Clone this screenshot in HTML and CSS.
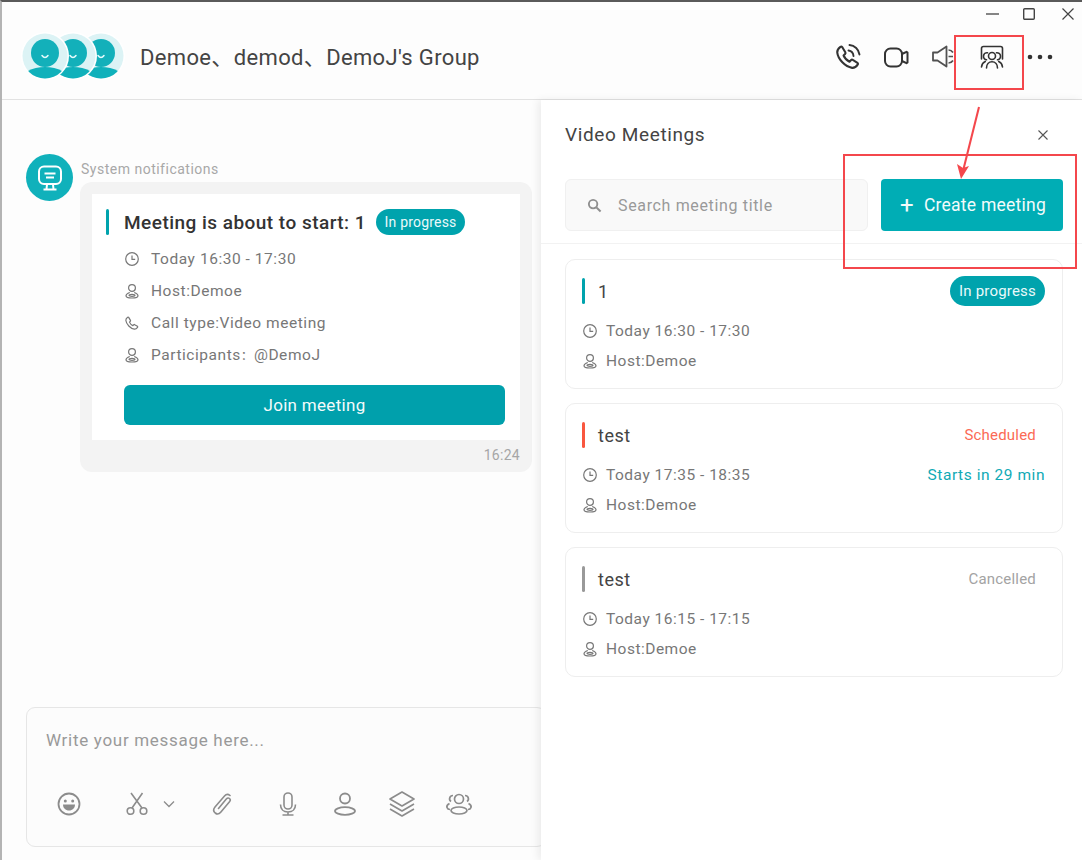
FILE: index.html
```html
<!DOCTYPE html>
<html lang="en">
<head>
<meta charset="utf-8">
<title>Video Meetings</title>
<link rel="stylesheet" href="styles.css">
</head>
<body>
<svg class="defs" width="0" height="0" aria-hidden="true">
  <defs>
    <clipPath id="round"><circle cx="24" cy="24" r="22.500"/></clipPath>
    <symbol id="i-avatar" viewBox="0 0 48 48">
      <circle cx="24" cy="24" r="24" fill="#fff"/>
      <circle cx="24" cy="24" r="22.500" fill="#dcf3f5"/>
      <g clip-path="url(#round)">
        <circle cx="24" cy="21" r="14" fill="#13b0ba"/>
        <ellipse cx="24" cy="49" rx="24" ry="14" fill="#10b1bb"/>
      </g>
      <path d="M21 23.500q3 4 6 0" fill="none" stroke="#e6fbfc" stroke-width="1.500" stroke-linecap="round"/>
    </symbol>
    <symbol id="i-clock" viewBox="0 0 16 16">
      <circle cx="8" cy="8" r="6.300" fill="none" stroke="currentColor" stroke-width="1.200"/>
      <path d="M8 4.500V8.300H11.200" fill="none" stroke="currentColor" stroke-width="1.200"/>
    </symbol>
    <symbol id="i-host" viewBox="0 0 16 16">
      <g fill="none" stroke="currentColor" stroke-width="1.200">
        <circle cx="8" cy="5" r="3.400"/>
        <path d="M5.800 9.500C3.500 10.300 2 11.300 2 12.700 2 14 4.500 15 8 15s6-1 6-2.300c0-1.400-1.500-2.400-3.800-3.200"/>
        <ellipse cx="8" cy="12.300" rx="3" ry="1"/>
      </g>
    </symbol>
    <symbol id="i-phone" viewBox="0 0 24 24">
      <path d="M7 3.500 9.700 8c.3.500.2 1-.2 1.400L8.200 10.700c1 2.300 2.800 4.300 5.100 5.300l1.400-1.400c.4-.4 1-.4 1.400-.1l4 2.500c.5.300.6 1 .2 1.500-1.100 1.600-2.700 3-4.800 2.800C9.500 20.300 3.500 14 2.800 8.300 2.500 6 4 4.400 5.500 3.300c.5-.3 1.200-.2 1.500.2Z" fill="none" stroke="currentColor" stroke-width="1.800" stroke-linejoin="round"/>
    </symbol>
  </defs>
</svg>

<div class="window">
  <header class="header">
    <div class="avatars">
      <svg class="avatar stack"><use href="#i-avatar"/></svg>
      <svg class="avatar stack"><use href="#i-avatar"/></svg>
      <svg class="avatar stack"><use href="#i-avatar"/></svg>
    </div>
    <h1 class="group-title">Demoe、demod、DemoJ's Group</h1>
    <div class="tools">
      <svg class="tool" viewBox="0 0 28 28"><use href="#i-phone" width="28" height="28"/><path d="M14.500 7.500a6 6 0 0 1 5 5.500M15.500 2a11 11 0 0 1 10 9.500" fill="none" stroke="currentColor" stroke-width="1.900" stroke-linecap="round"/></svg>
      <svg class="tool" viewBox="0 0 28 28"><rect x="3" y="5.500" width="17" height="18" rx="5.500" fill="none" stroke="currentColor" stroke-width="2"/><path d="M20 11 24.500 8.800 25.500 9.500V19.500L24.500 20.200 20 18" fill="none" stroke="currentColor" stroke-width="2" stroke-linejoin="round"/></svg>
      <svg class="tool" viewBox="0 0 28 28"><path d="M3 9.500H7.500L16.500 3.500V23.500L7.500 17.500H3Z" fill="none" stroke="currentColor" stroke-width="1.800" stroke-linejoin="round" opacity=".85"/><path d="M18.500 7C21 7 22 8 23 9.500M18.500 13.500H23M18.500 20C21 20 22 19 23 17.500" fill="none" stroke="currentColor" stroke-width="1.700" opacity=".85"/></svg>
      <svg class="tool" viewBox="0 0 28 28"><g fill="none" stroke="currentColor" stroke-width="1.600" stroke-linecap="round"><path d="M3.500 16V5.500C3.500 4.400 4.400 3.500 5.500 3.500h17C23.600 3.500 24.500 4.400 24.500 5.500V16"/><circle cx="14" cy="13" r="3.500"/><path d="M9.500 9.800a3.400 3.400 0 0 0-1 7M18.500 9.800a3.400 3.400 0 0 1 1 7M8.500 25c0-3.800 2.300-6.300 5.500-6.300s5.500 2.500 5.500 6.300M3.500 24c.3-2.700 1.500-4.500 3.800-5.500M24.500 24c-.3-2.700-1.500-4.500-3.800-5.500"/></g></svg>
      <svg class="tool" viewBox="0 0 28 28"><circle cx="4" cy="14" r="2.300" fill="currentColor"/><circle cx="14" cy="14" r="2.300" fill="currentColor"/><circle cx="24" cy="14" r="2.300" fill="currentColor"/></svg>
    </div>
    <div class="winctl">
      <svg class="ctl ctl-min" viewBox="0 0 14 14"><path d="M0 7H14" stroke="currentColor" stroke-width="1.400"/></svg>
      <svg class="ctl ctl-max" viewBox="0 0 14 14"><rect x="1.700" y="1.700" width="10.600" height="10.600" rx="1" fill="none" stroke="currentColor" stroke-width="1.400"/></svg>
      <svg class="ctl ctl-close" viewBox="0 0 14 14"><path d="M1.500 1.500 12.500 12.500M12.500 1.500 1.500 12.500" stroke="currentColor" stroke-width="1.200"/></svg>
    </div>
  </header>

  <main class="chat">
    <div class="message">
      <div class="sys-avatar">
        <svg viewBox="0 0 28 28" width="28" height="28"><g fill="none" stroke="#fff" stroke-width="2"><rect x="3" y="2.500" width="22" height="17.500" rx="5"/><path d="M8.500 9.500H19.500M10 13.500H18M11 20.500 10.500 25M17 20.500 17.500 25M7.500 25.500H20.500"/></g></svg>
      </div>
      <div class="msg-body">
        <div class="sender">System notifications</div>
        <div class="bubble">
          <div class="notice">
            <div class="notice-head">
              <span class="bar bar-teal"></span>
              <span class="notice-title">Meeting is about to start: 1</span>
              <span class="badge badge-small">In progress</span>
            </div>
            <div class="notice-row"><svg class="ico"><use href="#i-clock"/></svg>Today 16:30 - 17:30</div>
            <div class="notice-row"><svg class="ico"><use href="#i-host"/></svg>Host:Demoe</div>
            <div class="notice-row"><svg class="ico" viewBox="0 0 24 24"><use href="#i-phone" width="24" height="24"/></svg>Call type:Video meeting</div>
            <div class="notice-row"><svg class="ico"><use href="#i-host"/></svg><span>Participants<span class="colon">：</span>@DemoJ</span></div>
            <div class="join">Join meeting</div>
          </div>
          <div class="stamp">16:24</div>
        </div>
      </div>
    </div>

    <div class="composer">
      <div class="placeholder">Write your message here...</div>
      <div class="composer-tools">
        <svg class="ct ct-emoji" viewBox="0 0 24 24"><circle cx="12" cy="12" r="10.500" fill="none" stroke="currentColor" stroke-width="1.800"/><circle cx="8.300" cy="9" r="1.500" fill="currentColor"/><circle cx="15.700" cy="9" r="1.500" fill="currentColor"/><path d="M6 12.500H18C18 16 15.500 18.500 12 18.500S6 16 6 12.500Z" fill="currentColor"/></svg>
        <svg class="ct ct-cut" viewBox="0 0 24 24"><g fill="none" stroke="currentColor" stroke-width="1.600"><circle cx="5.500" cy="19" r="3.300"/><circle cx="18.500" cy="19" r="3.300"/><path d="M7 16 17.500 1M17 16 6 1"/></g></svg>
        <svg class="ct-chev" viewBox="0 0 12 8"><path d="M1 1.500 6 6.500 11 1.500" fill="none" stroke="currentColor" stroke-width="1.300"/></svg>
        <svg class="ct ct-clip" viewBox="0 0 24 24"><path d="M19 3.500c-1.800-1.500-4-1.200-5.500.5L4 15c-1.800 2.200-1.600 4.500.2 6 1.800 1.400 4 1 5.500-.8l8.800-10.400c1-1.200.9-2.500 0-3.300-1-.8-2.200-.6-3.200.6L7.500 16.500" fill="none" stroke="currentColor" stroke-width="1.600" stroke-linecap="round"/></svg>
        <svg class="ct ct-mic" viewBox="0 0 24 24"><g fill="none" stroke="currentColor" stroke-width="1.600"><rect x="8" y="1" width="8" height="16" rx="4"/><path d="M4.500 12.500c0 4.500 3 7.500 7.500 7.500s7.500-3 7.500-7.500M12 20V23M6.500 23H17.500"/></g></svg>
        <svg class="ct ct-person" viewBox="0 0 24 24"><g fill="none" stroke="currentColor" stroke-width="1.800"><circle cx="12" cy="6.500" r="5"/><ellipse cx="12" cy="19" rx="10" ry="3.800"/></g></svg>
        <svg class="ct ct-layers" viewBox="0 0 28 28"><g fill="none" stroke="currentColor" stroke-width="1.700" stroke-linejoin="round"><path d="M14 2 26 9 14 16 2 9Z"/><path d="M2 14 14 21 26 14M2 19 14 26 26 19"/></g></svg>
        <svg class="ct ct-group" viewBox="0 0 28 24"><g fill="none" stroke="currentColor" stroke-width="1.700"><circle cx="14" cy="7" r="4.500"/><ellipse cx="14" cy="18.500" rx="8" ry="3.500"/><path d="M8 3.500a3.300 3.300 0 0 0-2 6M20 3.500a3.300 3.300 0 0 1 2 6M4.500 11.500C2.500 12.500 1.500 14 2 15.500 2.500 17 4 17.500 5 17.500M23.500 11.500c2 1 3 2.500 2.500 4-.5 1.500-2 2-3 2"/></g></svg>
      </div>
    </div>
  </main>

  <aside class="panel">
    <div class="panel-head">
      <h2 class="panel-title">Video Meetings</h2>
      <svg class="panel-close" viewBox="0 0 10 10"><path d="M.5.500 9.500 9.500M9.500.500.500 9.500" stroke="currentColor" stroke-width="1.100"/></svg>
    </div>
    <div class="panel-actions">
      <div class="search">
        <svg class="search-ico" viewBox="0 0 16 16"><circle cx="6.500" cy="6.500" r="4.500" fill="none" stroke="currentColor" stroke-width="2"/><path d="M10 10 14.500 14.500" stroke="currentColor" stroke-width="2.200"/></svg>
        <span>Search meeting title</span>
      </div>
      <div class="create"><span class="plus">+</span>Create meeting</div>
    </div>
    <div class="cards">
      <article class="card">
        <div class="card-head">
          <span class="bar bar-teal"></span><span class="card-title">1</span>
          <span class="badge">In progress</span>
        </div>
        <div class="card-row"><svg class="ico"><use href="#i-clock"/></svg>Today 16:30 - 17:30</div>
        <div class="card-row"><svg class="ico"><use href="#i-host"/></svg>Host:Demoe</div>
      </article>
      <article class="card">
        <div class="card-head">
          <span class="bar bar-red"></span><span class="card-title">test</span>
          <span class="status status-red">Scheduled</span>
        </div>
        <div class="card-row"><svg class="ico"><use href="#i-clock"/></svg>Today 17:35 - 18:35<span class="starts">Starts in 29 min</span></div>
        <div class="card-row"><svg class="ico"><use href="#i-host"/></svg>Host:Demoe</div>
      </article>
      <article class="card">
        <div class="card-head">
          <span class="bar bar-gray"></span><span class="card-title">test</span>
          <span class="status status-gray">Cancelled</span>
        </div>
        <div class="card-row"><svg class="ico"><use href="#i-clock"/></svg>Today 16:15 - 17:15</div>
        <div class="card-row"><svg class="ico"><use href="#i-host"/></svg>Host:Demoe</div>
      </article>
    </div>
  </aside>

  <div class="mark mark-tool"></div>
  <div class="mark mark-create"></div>
  <svg class="arrow" viewBox="0 0 30 80"><path d="M22 2 6 66" stroke="#f4474c" stroke-width="2" fill="none"/><path d="M4 74 0 59 6 63 12 61Z" fill="#f4474c"/></svg>
</div>
</body>
</html>
```

FILE: styles.css
```css
* { box-sizing: border-box; }
html, body { margin: 0; padding: 0; }
body { width: 1082px; height: 860px; overflow: hidden; font-family: Roboto, "Noto Sans CJK SC", sans-serif; }
.defs { position: absolute; }
h1, h2 { margin: 0; font-weight: 400; }

.window { position: relative; width: 1082px; height: 860px; overflow: hidden; display: flex; flex-direction: column; background: #fdfdfd; border-top: 2px solid #5a5a5a; border-left: 2px solid #b4b4b4; }

.header { flex: none; height: 98px; display: flex; align-items: center; padding: 10px 24px 0 19px; border-bottom: 1px solid #e2e2e2; }
.avatars { display: flex; width: 104px; margin-right: 15px; }
.avatar { width: 48px; height: 48px; flex: none; }
.stack + .stack { margin-left: -20px; }
.stack:nth-child(1) { position: relative; z-index: 3; }
.stack:nth-child(2) { position: relative; z-index: 2; }
.group-title { font-size: 22px; line-height: 28px; margin-top: 4px; color: #444; letter-spacing: .35px; white-space: nowrap; }
.tools { display: flex; align-items: center; gap: 20px; color: #333; margin: 2px 4px 0 auto; }
.tool { width: 28px; height: 28px; flex: none; }
.winctl { position: absolute; top: 5px; right: 7px; display: flex; align-items: center; gap: 25px; color: #444; }
.ctl { width: 14px; height: 14px; }
.ctl-min { width: 13px; margin-right: -2px; }

.chat { flex: 1; display: flex; flex-direction: column; justify-content: space-between; padding: 54px 0 13px 24px; min-height: 0; }
.message { display: flex; align-items: flex-start; gap: 7px; }
.sys-avatar { flex: none; width: 47px; height: 47px; border-radius: 50%; background: #10b1bb; display: flex; align-items: center; justify-content: center; }
.msg-body { width: 452px; }
.sender { font-size: 14px; line-height: 18px; margin: 6px 0 4px 1px; color: #a8a8a8; letter-spacing: .5px; }
.bubble { background: #f3f3f3; border-radius: 12px; padding: 12px; height: 290px; }
.notice { background: #fff; height: 246px; padding: 15px 14px 0 14px; }
.notice-head { display: flex; align-items: center; height: 26px; margin-bottom: 8px; }
.bar { flex: none; width: 3px; height: 26px; border-radius: 2px; margin-right: 15px; }
.bar-teal { background: #00a3ad; }
.bar-red { background: #f9573f; }
.bar-gray { background: #999; }
.notice-title { font-size: 19px; font-weight: 500; color: #333; letter-spacing: .47px; margin-right: 10px; white-space: nowrap; }
.badge { margin-left: auto; height: 30px; width: 95px; border-radius: 15px; background: #00a3ad; color: #e9f9fa; font-size: 15px; display: flex; align-items: center; justify-content: center; letter-spacing: .2px; }
.badge-small { flex: none; margin-left: 0; width: 89px; height: 26px; border-radius: 13px; font-size: 14px; }
.notice-row { display: flex; align-items: center; height: 32px; line-height: 20px; padding-left: 18px; font-size: 15.500px; color: #777; letter-spacing: .55px; }
.notice-row .ico { margin-right: 11px; }
.colon { font-size: 12.500px; }
.ico { flex: none; width: 16px; height: 16px; color: #777; }
.join { margin: 14px 0 0 18px; width: 381px; height: 40px; border-radius: 6px; background: #00a0ac; color: #f4fbfb; font-size: 17px; letter-spacing: .3px; display: flex; align-items: center; justify-content: center; }
.stamp { text-align: right; margin: 7px 0 0; font-size: 14px; line-height: 16px; color: #a6a6a6; letter-spacing: .3px; }

.composer { height: 140px; margin-right: -6px; width: 520px; background: #fcfcfc; border: 1px solid #e6e6e6; border-radius: 9px; padding: 21px 0 0 19px; }
.placeholder { font-size: 17px; line-height: 22px; color: #999; letter-spacing: .7px; }
.composer-tools { margin-top: 39px; display: flex; align-items: center; color: #8c8c8c; }
.ct { flex: none; height: 24px; width: 24px; }
.ct-emoji { margin-left: 11px; }
.ct-cut { margin-left: 44px; }
.ct-chev { width: 12px; height: 8px; margin-left: 14px; }
.ct-clip { margin-left: 36px; }
.ct-mic { margin-left: 41px; }
.ct-person { margin-left: 33px; }
.ct-layers { margin-left: 31px; width: 28px; height: 28px; }
.ct-group { margin-left: 29px; width: 28px; }

.panel { position: absolute; left: 539px; top: 98px; right: 0; bottom: 0; background: #fff; box-shadow: -3px 0 8px rgba(0, 0, 0, .07); }
.panel-head { display: flex; align-items: center; justify-content: space-between; height: 68px; padding: 1px 34px 0 24px; }
.panel-title { font-size: 19px; color: #444; letter-spacing: .62px; }
.panel-close { width: 10px; height: 10px; color: #555; }
.panel-actions { display: flex; gap: 13px; height: 76px; padding: 11px 19px 0 24px; margin-bottom: 15px; border-bottom: 1px solid #f2f2f2; }
.search { width: 303px; height: 52px; border: 1px solid #f0f0f0; border-radius: 6px; background: #f9f9f9; display: flex; align-items: center; padding-left: 21px; color: #999; font-size: 16px; letter-spacing: .65px; }
.search-ico { width: 15px; height: 15px; margin-right: 16px; color: #8f8f8f; }
.create { width: 182px; height: 52px; border-radius: 4px; background: #00adb5; color: #f2fbfb; font-size: 17.500px; letter-spacing: .25px; display: flex; align-items: center; padding-left: 19px; }
.plus { font-size: 24px; line-height: 1; margin-right: 10px; font-weight: 400; }

.cards { display: flex; flex-direction: column; gap: 14px; padding: 0 19px 0 24px; }
.card { height: 130px; border: 1px solid #eeeeee; border-radius: 10px; padding: 16px 17px 0 16px; background: #fff; }
.card-head { display: flex; align-items: center; height: 30px; margin-bottom: 10px; }
.card .bar { margin-right: 13px; }
.card-title { font-size: 18px; color: #444; letter-spacing: .5px; }
.card-row { display: flex; align-items: center; height: 30px; font-size: 15.500px; color: #777; letter-spacing: .5px; }
.card-row .ico { margin-right: 8px; }
.status { margin-left: auto; font-size: 15px; letter-spacing: .2px; margin-right: 9px; }
.status-red { color: #fb6a55; }
.status-gray { color: #a3a3a3; }
.starts { margin-left: auto; color: #10aab5; letter-spacing: .55px; }

.mark { position: absolute; border: 2px solid #f4474c; }
.mark-tool { left: 952px; top: 33px; width: 70px; height: 55px; }
.mark-create { left: 841px; top: 152px; width: 234px; height: 115px; }
.arrow { position: absolute; left: 955px; top: 103px; width: 30px; height: 80px; }
```
